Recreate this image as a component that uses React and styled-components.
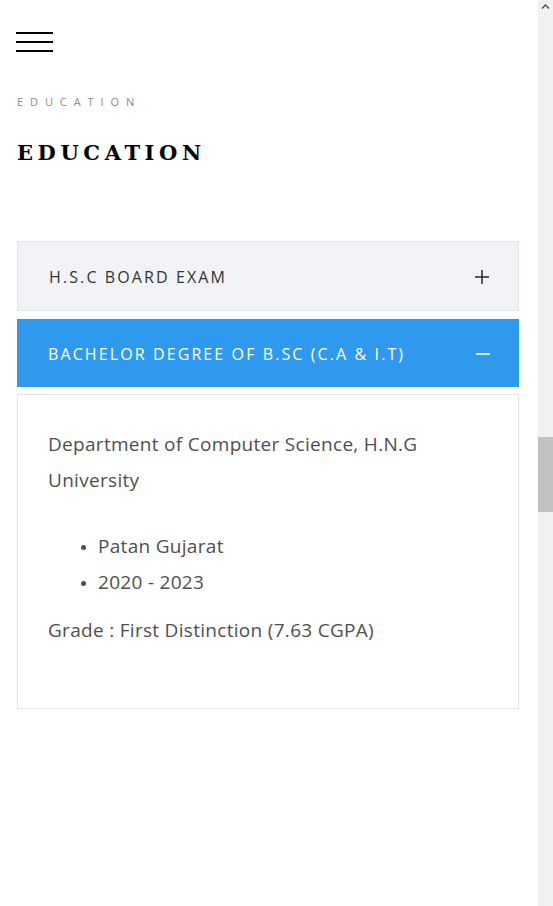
import React, { useState } from 'react'
import styled, { createGlobalStyle } from 'styled-components'

const GlobalStyle = createGlobalStyle`
  html, body {
    margin: 0;
    padding: 0;
    background: #ffffff;
    overflow: hidden;
  }
  * { box-sizing: border-box; }
`

const Page = styled.div`
  display: flex;
  width: 553px;
  height: 906px;
`

const Main = styled.main`
  width: 538px;
  padding: 32px 19px 0 17px;
  font-family: "Open Sans", "Noto Sans", sans-serif;
`

const Burger = styled.button`
  display: flex;
  flex-direction: column;
  gap: 7px;
  width: 37px;
  margin-left: -1px;
  padding: 0;
  border: 0;
  background: none;
  cursor: pointer;
  span {
    display: block;
    height: 2px;
    background: #000;
  }
`

const Label = styled.div`
  margin-top: 43px;
  font-size: 11px;
  line-height: 14px;
  letter-spacing: 6.9px;
  color: #8a8a8a;
`

const Title = styled.h2`
  margin: 30px 0 0;
  font-family: "DejaVu Serif", "Liberation Serif", serif;
  font-weight: 700;
  font-size: 21px;
  line-height: 28px;
  letter-spacing: 4.6px;
  color: #000;
`

const Accordion = styled.div`
  margin-top: 74px;
  display: flex;
  flex-direction: column;
`

const Head = styled.button`
  display: flex;
  align-items: center;
  justify-content: space-between;
  width: 100%;
  height: ${p => (p.open ? '68px' : '70px')};
  margin-bottom: ${p => (p.open ? '7px' : '8px')};
  padding: 2px 28px 0 31px;
  border: ${p => (p.open ? '0' : '1px solid #e4e5e8')};
  background: ${p => (p.open ? '#2f99ee' : '#f2f3f7')};
  color: ${p => (p.open ? '#ffffff' : '#333333')};
  font-family: inherit;
  font-size: 16px;
  font-weight: 400;
  letter-spacing: 2.1px;
  text-align: left;
  cursor: pointer;
`

const Icon = styled.svg`
  flex: none;
  width: 16px;
  height: 16px;
  stroke: currentColor;
  stroke-width: 1.6;
`

const Panel = styled.div`
  border: 1px solid #e4e5e8;
  padding: 31px 30px 60px 30px;
  color: #4f4f4f;
  font-size: 19px;
  line-height: 36px;
  letter-spacing: 0.3px;
  p { margin: 0; }
`

const List = styled.ul`
  margin: 30px 0 12px;
  padding-left: 50px;
  li::marker { font-size: 14px; }
`

const Track = styled.div`
  width: 15px;
  height: 906px;
  background: #f1f1f1;
  display: flex;
  flex-direction: column;
  align-items: center;
`

const Arrow = styled.svg`
  width: 15px;
  height: 12px;
  fill: #505050;
`

const Thumb = styled.div`
  width: 15px;
  height: 75px;
  margin-top: 425px;
  background: #c1c1c1;
`

const items = [
  { title: 'H.S.C BOARD EXAM' },
  {
    title: 'BACHELOR DEGREE OF B.SC (C.A & I.T)',
    body: {
      text: 'Department of Computer Science, H.N.G University',
      points: ['Patan Gujarat', '2020 - 2023'],
      grade: 'Grade : First Distinction (7.63 CGPA)',
    },
  },
]

export default function App() {
  const [open, setOpen] = useState(1)
  return (
    <Page>
      <GlobalStyle />
      <Main>
        <Burger aria-label="menu">
          <span />
          <span />
          <span />
        </Burger>
        <Label>EDUCATION</Label>
        <Title>EDUCATION</Title>
        <Accordion>
          {items.map((item, i) => (
            <React.Fragment key={item.title}>
              <Head open={open === i} onClick={() => setOpen(open === i ? -1 : i)}>
                {item.title}
                <Icon viewBox="0 0 16 16">
                  <line x1="1" y1="8" x2="15" y2="8" />
                  {open !== i && <line x1="8" y1="1" x2="8" y2="15" />}
                </Icon>
              </Head>
              {open === i && item.body && (
                <Panel>
                  <p>{item.body.text}</p>
                  <List>
                    {item.body.points.map(pt => (
                      <li key={pt}>{pt}</li>
                    ))}
                  </List>
                  <p>{item.body.grade}</p>
                </Panel>
              )}
            </React.Fragment>
          ))}
        </Accordion>
      </Main>
      <Track>
        <Arrow viewBox="0 0 15 12">
          <path d="M3.5 8 L7.5 4 L11.5 8 L10.5 9 L7.5 6 L4.5 9 Z" />
        </Arrow>
        <Thumb />
      </Track>
    </Page>
  )
}
